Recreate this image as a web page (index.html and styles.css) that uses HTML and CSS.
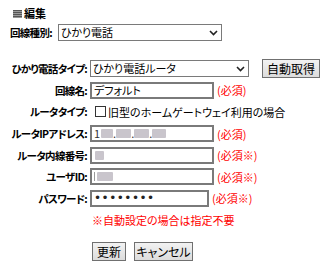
FILE: index.html
```html
<!DOCTYPE html>
<html lang="ja">
  <head>
    <meta charset="UTF-8">
    <title>編集</title>
    <link rel="stylesheet" href="styles.css">
  </head>
  <body>
    <div class="title"><span class="title-icon"></span>編集</div>
    <div class="line-type">
      <span class="label">回線種別:</span>
      <span class="select-wrap wide">
        <select><option>ひかり電話</option></select>
        <svg class="chev" width="9" height="6" viewBox="0 0 9 6"><path d="M1 1 L4.5 4.5 L8 1" fill="none" stroke="#222" stroke-width="1.6"/></svg>
      </span>
    </div>
    <div class="form">
      <label class="label">ひかり電話タイプ:</label>
      <div class="field">
        <span class="select-wrap">
          <select><option>ひかり電話ルータ</option></select>
          <svg class="chev" width="9" height="6" viewBox="0 0 9 6"><path d="M1 1 L4.5 4.5 L8 1" fill="none" stroke="#222" stroke-width="1.6"/></svg>
        </span>
        <button class="btn auto">自動取得</button>
      </div>

      <label class="label">回線名:</label>
      <div class="field"><input class="text" value="デフォルト"><span class="req">(必須)</span></div>

      <label class="label">ルータタイプ:</label>
      <div class="field check"><span class="box"></span>旧型のホームゲートウェイ利用の場合</div>

      <label class="label">ルータIPアドレス:</label>
      <div class="field">
        <div class="text fake">1<span class="blur b1"></span>.<span class="blur b2"></span>.<span class="blur b3"></span>.<span class="blur b4"></span></div>
        <span class="req">(必須)</span>
      </div>

      <label class="label">ルータ内線番号:</label>
      <div class="field">
        <div class="text fake"><span class="blur b5"></span></div>
        <span class="req">(必須※)</span>
      </div>

      <label class="label">ユーザID:</label>
      <div class="field">
        <div class="text fake"><span class="bar"></span><span class="blur b6"></span></div>
        <span class="req">(必須※)</span>
      </div>

      <label class="label">パスワード:</label>
      <div class="field">
        <input class="text pass" type="password" value="abcdefgh">
        <span class="req">(必須※)</span>
      </div>

      <span></span>
      <div class="note">※自動設定の場合は指定不要</div>
    </div>
    <div class="actions">
      <button class="btn update">更新</button>
      <button class="btn cancel">キャンセル</button>
    </div>
  </body>
</html>
```

FILE: styles.css
```css
body {
  margin: 0;
  padding: 8px 0 0 10px;
  font-family: "Noto Sans CJK JP", "Noto Sans", sans-serif;
  font-size: 11px;
  font-feature-settings: "palt";
  color: #000;
  background: #fff;
}
.title {
  display: flex;
  align-items: center;
  gap: 2px;
  height: 11px;
  margin-left: 3px;
  font-weight: bold;
  line-height: 11px;
}
.title-icon {
  width: 9px;
  height: 8px;
  background: repeating-linear-gradient(#555 0, #555 1px, #999 1px, #999 2px);
}
.line-type {
  display: flex;
  align-items: center;
  gap: 6px;
  margin-top: 5px;
  height: 16px;
}
.label {
  font-weight: bold;
  font-size: 10.5px;
  white-space: nowrap;
  letter-spacing: -0.7px;
}
.select-wrap {
  position: relative;
  display: inline-block;
}
select {
  appearance: none;
  -webkit-appearance: none;
  width: 159px;
  height: 17px;
  border: 1px solid #7a7a7a;
  background: #fff;
  padding: 0 0 0 2px;
  font: inherit;
  font-feature-settings: "palt";
  line-height: 15px;
  display: block;
}
.select-wrap.wide select { width: 164px; }
.chev {
  position: absolute;
  right: 4px;
  top: 6px;
  pointer-events: none;
}
.form {
  display: grid;
  grid-template-columns: 77px auto;
  column-gap: 3px;
  margin-top: 18px;
  grid-auto-rows: 21.6px;
  align-items: center;
}
.form .label { text-align: right; }
.field {
  display: flex;
  align-items: center;
  white-space: nowrap;
}
.text {
  box-sizing: border-box;
  width: 124px;
  height: 17px;
  border: 2px solid #7a7a7a;
  background: #fff;
  padding: 0 2px;
  font: inherit;
  font-feature-settings: "palt";
  line-height: 13px;
  outline: none;
}
.fake {
  display: flex;
  align-items: center;
  color: #333;
}
.pass {
  width: 119px;
  font-family: "DejaVu Sans", sans-serif;
  font-size: 12px;
  letter-spacing: 0.5px;
  color: #222;
}
.req {
  color: #f00;
  margin-left: 3px;
}
.check { padding-left: 5px; }
.box {
  width: 11px;
  height: 11px;
  box-sizing: border-box;
  border: 1px solid #333;
  margin-right: 2px;
}
.blur {
  display: inline-block;
  height: 9px;
  background: #c9c5cc;
  border-radius: 1px;
  filter: blur(0.6px);
}
.b1 { width: 12px; margin-left: 1px; }
.b2 { width: 15px; }
.b3 { width: 15px; }
.b4 { width: 14px; }
.b5 { width: 9px; margin-left: 1px; }
.b6 { width: 16px; margin-left: 2px; }
.bar {
  display: inline-block;
  width: 1px;
  height: 9px;
  background: #999;
}
.note {
  color: #f00;
  padding-left: 2px;
}
.btn {
  height: 19px;
  padding: 0;
  border: 1px solid #707070;
  background: linear-gradient(#f2f2f2, #dcdcdc);
  font: inherit;
  font-size: 12px;
  font-feature-settings: "palt";
  line-height: 17px;
  color: #000;
}
.btn.auto {
  margin-left: 13px;
  width: 58px;
}
.update { width: 34px; }
.cancel { width: 59px; }
.actions {
  display: flex;
  gap: 8px;
  margin: 11px 0 0 82px;
}
```
